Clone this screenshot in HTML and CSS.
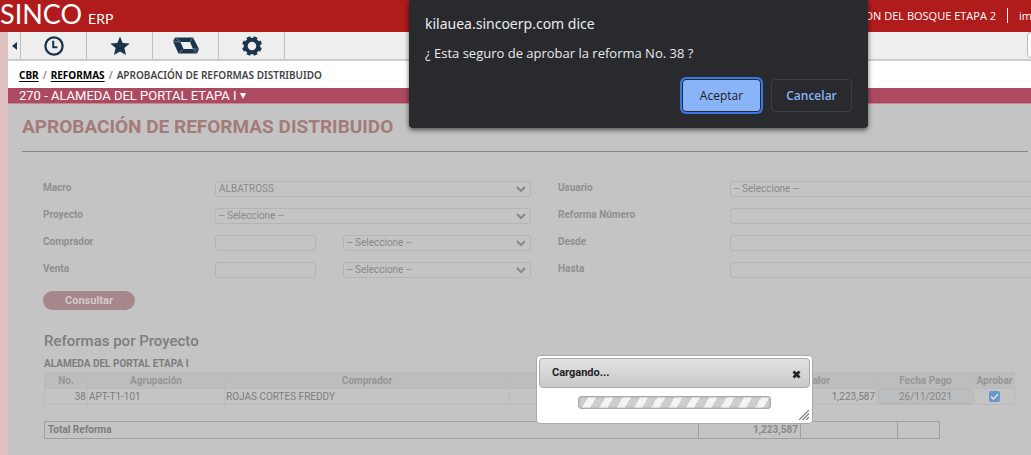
FILE: index.html
```html
<!DOCTYPE html>
<html lang="es">
<head>
<meta charset="utf-8">
<meta name="viewport" content="width=device-width, initial-scale=1">
<title>Aprobación de Reformas Distribuido</title>
<link rel="stylesheet" href="styles.css">
</head>
<body>
<header class="topbar">
  <div class="brand"><span class="brand-name">SINCO</span><span class="brand-suffix">ERP</span></div>
  <div class="session"><span class="session-company">CON DEL BOSQUE ETAPA 2</span><span class="session-user">im</span></div>
</header>
<div class="shell">
  <nav class="toolbar" aria-label="Accesos">
    <button class="tool tool-back" type="button" aria-label="Contraer"><svg width="5" height="8" viewBox="0 0 5 8"><path d="M5 0v8L0 4z" fill="#1b344d"/></svg></button>
    <button class="tool" type="button" aria-label="Recientes"><svg width="20" height="20" viewBox="0 0 20 20" fill="none" stroke="#1b344d"><circle cx="10" cy="10" r="8.6" stroke-width="2.3"/><path d="M9.2 4.8v6.4h4.2" stroke-width="2"/></svg></button>
    <button class="tool" type="button" aria-label="Favoritos"><svg width="20" height="20" viewBox="0 0 20 20"><path d="M10 .5l2.7 6.4 7 .6-5.300 4.600 1.600 6.900L10 15.400 4 19l1.600-6.900L.3 7.500l7-.6z" fill="#1b344d"/></svg></button>
    <button class="tool" type="button" aria-label="Módulos"><svg width="26" height="17" viewBox="0 0 26 17"><path fill="#1b344d" fill-rule="evenodd" d="M2 .5h18l6 11.500-2 4.500H5.500L0 4.500zM7.500 5l3 7h9.500l-3-7z"/><path d="M0 4.500l7.500.5M2 .5l5.500 4.500M17 5l3-4.500M20 12l6 0M10.500 12l-5 4.500M20 12l4 4.500" stroke="#8796a4" stroke-width=".7" fill="none"/></svg></button>
    <button class="tool" type="button" aria-label="Configuración"><svg width="20" height="20" viewBox="0 0 20 20"><g fill="none" stroke="#1b344d"><circle cx="10" cy="10" r="6.300" stroke-width="4"/><path stroke-width="4" d="M17 7.100l2.250-.850M12.900 3l.850-2.050M7.100 3L6.250.95M3 7.100L.95 6.250M3 12.900l-2.050.850M7.100 17l-.850 2.050M12.900 17l.850 2.050M17 12.900l2.050.850"/></g></svg></button>
    <input class="tool-search" type="text" aria-label="Buscar">
  </nav>
  <nav class="crumbs" aria-label="Ruta"><a href="#">CBR</a><span class="slash">/</span><a href="#">REFORMAS</a><span class="slash">/</span><span>APROBACIÓN DE REFORMAS DISTRIBUIDO</span></nav>
  <button class="project" type="button">270 - ALAMEDA DEL PORTAL ETAPA I<svg width="6" height="6" viewBox="0 0 6 6"><path d="M0 0h6L3 6z" fill="#fff"/></svg></button>
  <main class="page">
    <h1 class="page-title">APROBACIÓN DE REFORMAS DISTRIBUIDO</h1>
    <form class="filters">
      <label for="macro">Macro</label>
      <select id="macro"><option>ALBATROSS</option></select>
      <label for="usuario">Usuario</label>
      <select id="usuario"><option>-- Seleccione --</option></select>
      <label for="proyecto">Proyecto</label>
      <select id="proyecto"><option>-- Seleccione --</option></select>
      <label for="reforma">Reforma Número</label>
      <input id="reforma" type="text">
      <label for="comprador">Comprador</label>
      <div class="pair"><input id="comprador" type="text"><select aria-label="Lista de compradores"><option>-- Seleccione --</option></select></div>
      <label for="desde">Desde</label>
      <input id="desde" type="text">
      <label for="venta">Venta</label>
      <div class="pair"><input id="venta" type="text"><select aria-label="Lista de ventas"><option>-- Seleccione --</option></select></div>
      <label for="hasta">Hasta</label>
      <input id="hasta" type="text">
      <button class="query" type="button">Consultar</button>
    </form>
    <section class="results">
      <h2 class="results-title">Reformas por Proyecto</h2>
      <h3 class="results-project">ALAMEDA DEL PORTAL ETAPA I</h3>
      <table class="reforms">
        <colgroup><col class="c-no"><col class="c-group"><col class="c-buyer"><col><col class="c-value"><col class="c-date"><col class="c-ok"></colgroup>
        <thead><tr><th>No.</th><th>Agrupación</th><th>Comprador</th><th></th><th>Valor</th><th>Fecha Pago</th><th>Aprobar</th></tr></thead>
        <tbody><tr><td class="num">38</td><td>APT-T1-101</td><td>ROJAS CORTES FREDDY</td><td></td><td class="num">1,223,587</td><td><input class="date" type="text" value="26/11/2021" aria-label="Fecha Pago"></td><td class="ok"><input class="check" type="checkbox" checked aria-label="Aprobar"></td></tr></tbody>
      </table>
      <table class="total">
        <colgroup><col><col class="t-sum"><col class="t-date"><col class="t-ok"></colgroup>
        <tbody><tr><th scope="row">Total Reforma</th><td class="num">1,223,587</td><td></td><td></td></tr></tbody>
      </table>
    </section>
  </main>
</div>
<section class="loading" role="dialog" aria-label="Cargando">
  <div class="loading-head"><span>Cargando...</span><button type="button" aria-label="Cerrar"><svg width="9" height="9" viewBox="0 0 9 9"><path d="M1.500 1.500l6 6M7.500 1.500l-6 6" stroke="#222" stroke-width="2.800"/></svg></button></div>
  <div class="loading-bar" role="progressbar" aria-label="Cargando"></div>
  <svg class="grip" width="10" height="10" viewBox="0 0 10 10"><path d="M0 10L10 0M3.500 10L10 3.500M7 10l3-3" stroke="#777" stroke-width="1.200"/></svg>
</section>
<section class="alert" role="alertdialog" aria-labelledby="alert-title" aria-describedby="alert-text">
  <h2 id="alert-title">kilauea.sincoerp.com dice</h2>
  <p id="alert-text">¿ Esta seguro de aprobar la reforma No. 38 ?</p>
  <div class="alert-actions"><button class="accept" type="button">Aceptar</button><button class="cancel" type="button">Cancelar</button></div>
</section>
</body>
</html>
```
FILE: styles.css
```css
* { box-sizing: border-box; }
body {
  margin: 0;
  min-height: 100vh;
  overflow: hidden;
  background: #e0c2c4;
  font-family: Roboto, "Liberation Sans", sans-serif;
  font-size: 10px;
}
h1, h2, h3, p { margin: 0; font-weight: 500; }
button, input, select { font: inherit; margin: 0; }
svg { display: block; }

.topbar {
  display: flex;
  justify-content: space-between;
  height: 32px;
  background: #b01b1b;
  color: #fff;
}
.brand { display: flex; align-items: baseline; gap: 6px; font-family: Lato, sans-serif; line-height: 27px; }
.brand-name { font-size: 27px; }
.brand-suffix { font-size: 14px; }
.session { display: flex; align-items: center; height: 30px; font: 11px/15px "Open Sans", sans-serif; white-space: nowrap; }
.session-company { padding-right: 11px; border-right: 1px solid #fff; }
.session-user { width: 23px; padding-left: 11px; overflow: hidden; }

.shell { margin-left: 8px; min-height: calc(100vh - 32px); display: flex; flex-direction: column; background: #c4c4c4; }
.toolbar { display: flex; height: 29px; background: #eee; border-bottom: 2px solid #ccc; overflow: hidden; }
.tool {
  width: 66px;
  padding: 0;
  display: flex;
  align-items: center;
  justify-content: center;
  background: none;
  border: 0;
  border-right: 1px solid #c0c0c0;
}
.tool-back { width: 13px; }
.tool-search { width: 200px; height: 26px; flex: none; margin-left: auto; margin-right: -196px; background: #fff; border: 1px solid #bbb; border-radius: 4px; }

.crumbs { display: flex; align-items: center; height: 27px; padding: 1px 11px 0; background: #fff; color: #444; font: 600 10px/14px "Noto Sans", sans-serif; }
.crumbs a { color: #000; font-weight: 700; text-underline-offset: 2px; }
.slash { padding: 0 4px; color: #888; }
.project {
  display: flex;
  align-items: center;
  gap: 4px;
  height: 16px;
  padding: 0 11px;
  background: #ad4a5f;
  border: 0;
  border-bottom: 1px solid #c08a95;
  color: #fff;
  font-size: 13px;
  line-height: 15px;
}

.page { padding-left: 14px; }
.page-title { margin-right: 3px; padding: 10px 0 12px; border-bottom: 1px solid #9c7c7b; color: #a47b79; font-size: 19px; font-weight: 700; line-height: 25px; }
.filters {
  display: grid;
  grid-template-columns: 172px 1fr 199px 1fr;
  grid-auto-rows: 16px;
  row-gap: 11px;
  align-items: center;
  margin: 29px -15px 0 21px;
  color: #8f8f8f;
}
.filters label { font-weight: 700; line-height: 12px; padding-bottom: 2px; }
.filters label:nth-of-type(even) { padding-left: 27px; }
.filters input, .filters select {
  width: 100%;
  min-width: 0;
  height: 16px;
  padding: 0 3px;
  background-color: transparent;
  border: 1px solid #b5b5b5;
  border-radius: 3px;
  color: #8a8a8a;
  line-height: 14px;
}
.filters select {
  appearance: none;
  background-image: url("data:image/svg+xml,%3Csvg xmlns='http://www.w3.org/2000/svg' width='10' height='7'%3E%3Cpath d='M1 1l4 4 4-4' fill='none' stroke='%23888' stroke-width='2'/%3E%3C/svg%3E");
  background-repeat: no-repeat;
  background-position: right 4px center;
}
.pair { display: grid; grid-template-columns: 101px 1fr; gap: 27px; }
.query {
  width: 92px;
  height: 19px;
  margin-top: 7px;
  padding: 0 0 1px;
  background: #a5878c;
  border: 0;
  border-radius: 10px;
  color: #d2cacb;
  font-size: 11px;
  font-weight: 700;
}

.results { margin: 27px 16px 0 22px; color: #7d7d7d; }
.results-title { font-size: 15px; line-height: 18px; }
.results-project { margin-top: 8px; font-size: 10px; font-weight: 700; line-height: 12px; }
.reforms, .total { border-collapse: collapse; table-layout: fixed; }
.reforms { width: 100%; margin-top: 2px; }
.reforms th, .reforms td { height: 16px; padding: 0 1px; border: 1px solid #bbb; line-height: 14px; }
.reforms th { background: #bdbdbd; color: #959595; font-weight: 700; }
.c-no { width: 43px; }
.c-group { width: 137px; }
.c-buyer { width: 285px; }
.c-value { width: 117px; }
.c-date { width: 98px; }
.c-ok { width: 40px; }
.num { text-align: right; }
.date { display: block; width: 100%; height: 15px; padding: 0; background: #bdbec0; border: 1px solid #b3b4b6; border-radius: 3px; color: #858585; text-align: center; }
.reforms .ok { text-align: center; }
.check { display: block; width: 11px; height: 11px; margin: 0 auto; appearance: none; border-radius: 2px; background: #6996cc url("data:image/svg+xml,%3Csvg xmlns='http://www.w3.org/2000/svg' width='11' height='11'%3E%3Cpath d='M2 5.500l2.500 2.500L9 3' fill='none' stroke='%23ddd' stroke-width='1.600'/%3E%3C/svg%3E"); }
.total { width: calc(100% - 75px); margin-top: 16px; }
.total th, .total td { height: 17px; padding: 0 3px; border: 1px solid #a0a0a0; line-height: 14px; font-weight: 700; text-align: left; }
.total .num { padding-right: 2px; text-align: right; color: #8a8a8a; }
.t-sum { width: 102px; }
.t-date { width: 97px; }
.t-ok { width: 42px; }

.loading { position: absolute; left: 536px; top: 355px; width: 277px; padding: 2px 2px 14px; background: #fff; border: 1px solid #aaa; border-radius: 4px; color: #222; }
.loading-head {
  display: flex;
  align-items: center;
  justify-content: space-between;
  height: 30px;
  padding: 0 8px 2px 12px;
  border: 1px solid #aaa;
  border-radius: 4px;
  background: linear-gradient(#e2e2e2, #c9c9c9);
  font-size: 11px;
  font-weight: 700;
}
.loading-head button { padding: 4px 0 0; border: 0; background: none; }
.loading-bar {
  height: 13px;
  margin: 8px 39px 0;
  border: 1px solid #aaa;
  border-radius: 3px;
  background: repeating-linear-gradient(120deg, #cecece 0 8px, #f4f4f4 8px 15px);
  box-shadow: inset 0 0 2px #999;
}
.grip { position: absolute; right: 3px; bottom: 3px; }

.alert { position: absolute; left: 409px; top: 0; width: 459px; height: 128px; padding: 14px 16px; background: #292a2d; border-radius: 0 0 4px 4px; box-shadow: 0 2px 5px rgba(0, 0, 0, .6); color: #e8eaed; font: 13px/18px "Open Sans", sans-serif; }
.alert h2 { font-family: "Noto Sans", sans-serif; font-size: 14px; font-weight: 400; line-height: 20px; }
.alert p { margin-top: 10px; font-size: 13px; font-weight: 400; }
.alert-actions { display: flex; justify-content: flex-end; gap: 10px; margin-top: 17px; }
.alert-actions button { width: 81px; height: 33px; background: #292a2d; border: 1px solid #3c4043; border-radius: 4px; color: #8ab4f8; font-size: 12px; font-weight: 600; }
.alert-actions .accept { background: #8ab4f8; border-color: #292a2d; color: #202124; box-shadow: 0 0 0 2px #3b78e7; width: 79px; font-weight: 500; }
```
